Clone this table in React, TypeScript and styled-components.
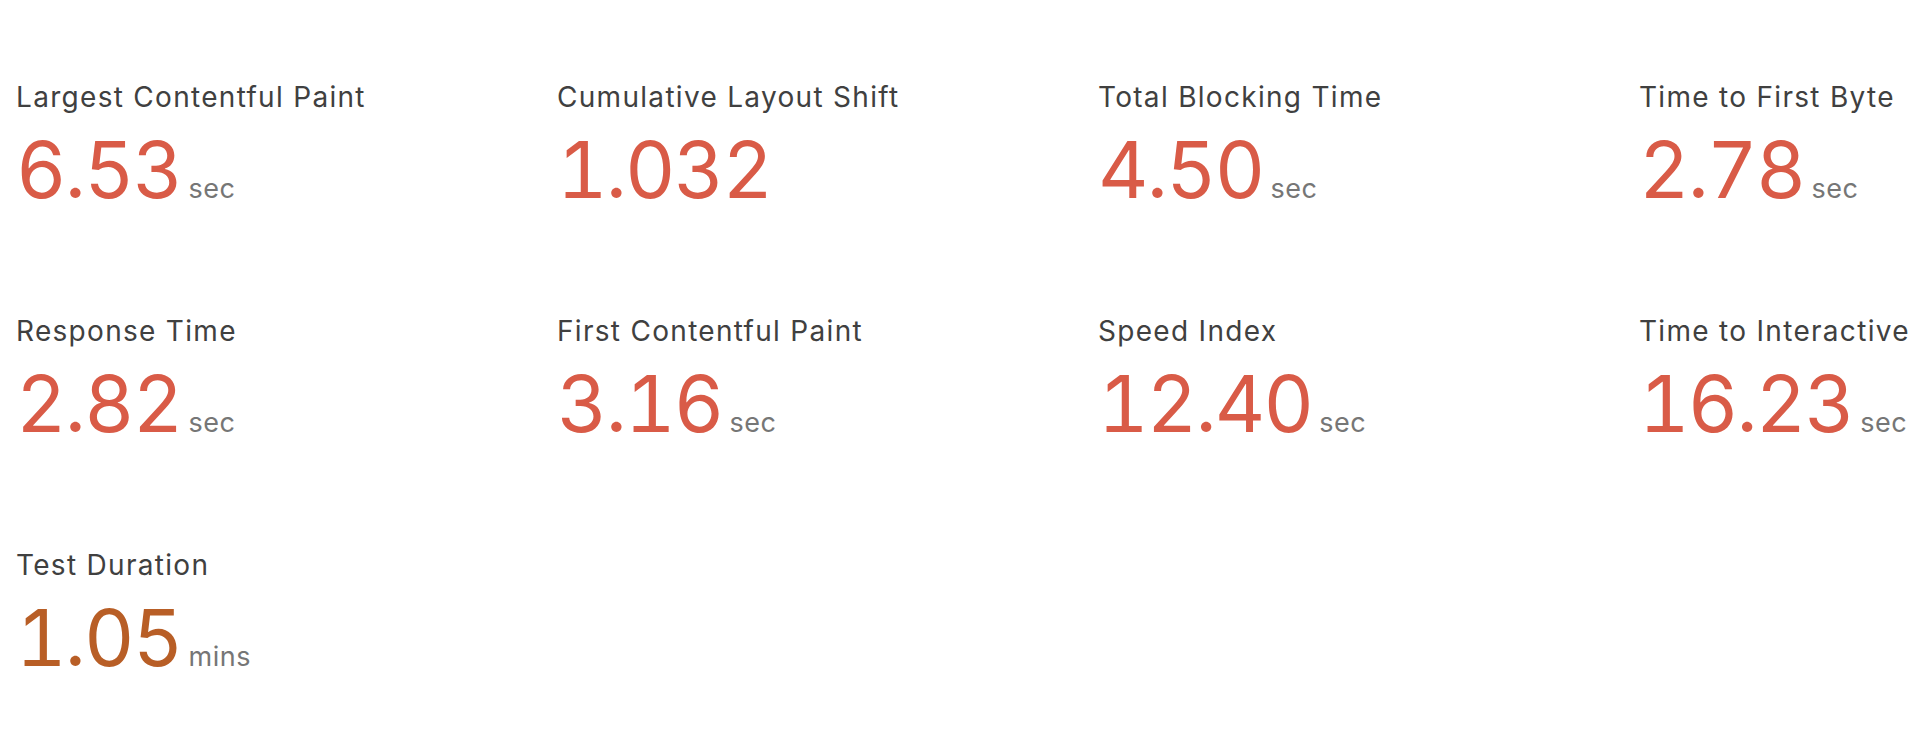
import React from "react";
import styled, { createGlobalStyle } from "styled-components";

const Global = createGlobalStyle`
  html, body { margin: 0; padding: 0; background: #ffffff; }
  body { font-family: Inter, "Noto Sans", "Liberation Sans", sans-serif; overflow: hidden; }
`;

const Page = styled.main`
  padding: 80px 0 0 16px;
  width: 1924px;
  box-sizing: border-box;
  overflow: hidden;
`;

const Grid = styled.section`
  display: grid;
  grid-template-columns: repeat(4, 541px);
  row-gap: 97px;
`;

const Metric = styled.div`
  display: flex;
  flex-direction: column;
`;

const Label = styled.div`
  font-size: 28px;
  line-height: 34px;
  color: #404040;
  white-space: nowrap;
  letter-spacing: 1.3px;
`;

const ValueRow = styled.div`
  display: flex;
  align-items: baseline;
  margin-top: 9px;
`;

const Value = styled.span<{ $tone: "red" | "orange" }>`
  font-size: 78px;
  line-height: 94px;
  color: ${(p) => (p.$tone === "red" ? "#d95b47" : "#b85e26")};
  font-variant-numeric: tabular-nums;
  letter-spacing: -1.8px;
`;

const Unit = styled.span`
  font-size: 27px;
  color: #767676;
  margin-left: 7px;
  letter-spacing: 0.5px;
`;

type M = { label: string; value: string; unit?: string; tone: "red" | "orange" };

const metrics: M[] = [
  { label: "Largest Contentful Paint", value: "6.53", unit: "sec", tone: "red" },
  { label: "Cumulative Layout Shift", value: "1.032", tone: "red" },
  { label: "Total Blocking Time", value: "4.50", unit: "sec", tone: "red" },
  { label: "Time to First Byte", value: "2.78", unit: "sec", tone: "red" },
  { label: "Response Time", value: "2.82", unit: "sec", tone: "red" },
  { label: "First Contentful Paint", value: "3.16", unit: "sec", tone: "red" },
  { label: "Speed Index", value: "12.40", unit: "sec", tone: "red" },
  { label: "Time to Interactive", value: "16.23", unit: "sec", tone: "red" },
  { label: "Test Duration", value: "1.05", unit: "mins", tone: "orange" },
];

export default function App() {
  return (
    <>
      <Global />
      <Page>
        <Grid>
          {metrics.map((m) => (
            <Metric key={m.label}>
              <Label>{m.label}</Label>
              <ValueRow>
                <Value $tone={m.tone}>{m.value}</Value>
                {m.unit && <Unit>{m.unit}</Unit>}
              </ValueRow>
            </Metric>
          ))}
        </Grid>
      </Page>
    </>
  );
}
